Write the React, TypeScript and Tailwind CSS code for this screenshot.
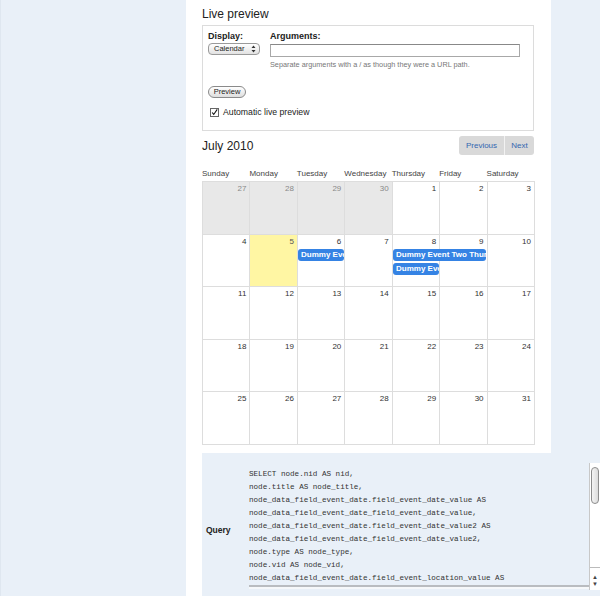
const weeks: { day: number; other?: boolean; today?: boolean }[][] = [
  [{ day: 27, other: true }, { day: 28, other: true }, { day: 29, other: true }, { day: 30, other: true }, { day: 1 }, { day: 2 }, { day: 3 }],
  [{ day: 4 }, { day: 5, today: true }, { day: 6 }, { day: 7 }, { day: 8 }, { day: 9 }, { day: 10 }],
  [11, 12, 13, 14, 15, 16, 17].map((d) => ({ day: d })),
  [18, 19, 20, 21, 22, 23, 24].map((d) => ({ day: d })),
  [25, 26, 27, 28, 29, 30, 31].map((d) => ({ day: d })),
];

const dayNames = ['Sunday', 'Monday', 'Tuesday', 'Wednesday', 'Thursday', 'Friday', 'Saturday'];

const sqlLines = [
  'SELECT node.nid AS nid,',
  'node.title AS node_title,',
  'node_data_field_event_date.field_event_date_value AS',
  'node_data_field_event_date_field_event_date_value,',
  'node_data_field_event_date.field_event_date_value2 AS',
  'node_data_field_event_date_field_event_date_value2,',
  'node.type AS node_type,',
  'node.vid AS node_vid,',
  'node_data_field_event_date.field_event_location_value AS',
];

// event chip on the week row
function EventChip({ label, className }: { label: string; className: string }): React.ReactElement {
  return (
    <div
      className={`absolute h-[12px] overflow-hidden whitespace-nowrap rounded-[3px] bg-[#3583e4] pl-[3px] text-[8px] font-bold leading-[12px] text-white ${className}`}
    >
      {label}
    </div>
  );
}

export default function App(): React.ReactElement {
  return (
    <div className="h-[596px] overflow-hidden border-l border-[#dfe7f0] bg-[#e9f0f8] font-['Liberation_Sans',Arial,sans-serif] text-[#222]">
      <div className="ml-[185px] h-[596px] w-[365px] bg-white pl-4 pr-[17px] pt-[5px]">
        <h2 className="text-[12px] leading-[18px] text-[#222]">Live preview</h2>

        {/* preview options */}
        <div className="mt-[2px] h-[106px] border border-[#dcdcdc] px-[5px] pt-[5px]">
          <div className="flex">
            <div className="w-[62px]">
              <div className="text-[9px] font-bold leading-[11px]">Display:</div>
              <div className="mt-[1px] flex h-[12px] w-[52px] items-center justify-between rounded-[4px] border border-[#9a9a9a] bg-gradient-to-b from-white to-[#e2e2e2] pl-[5px] pr-[3px] text-[7.5px] leading-none">
                <span>Calendar</span>
                <svg width="5" height="8" viewBox="0 0 5 8">
                  <path d="M2.5 0.5 L4.5 3 L0.5 3 Z M2.5 7.5 L4.5 5 L0.5 5 Z" fill="#333" />
                </svg>
              </div>
            </div>
            <div>
              <div className="text-[9px] font-bold leading-[11px]">Arguments:</div>
              <div className="mt-[2px] h-[13px] w-[250px] border border-[#a8a8a8] border-t-[#888] bg-white" />
              <div className="mt-[3px] text-[7.3px] leading-[9px] text-[#777]">
                Separate arguments with a / as though they were a URL path.
              </div>
            </div>
          </div>
          <div className="mt-[17px] flex h-[12px] w-[38px] items-center justify-center rounded-full border border-[#8a8a8a] bg-gradient-to-b from-white to-[#dedede] text-[7.5px] leading-none">
            Preview
          </div>
          <div className="mt-[9px] flex items-center pl-[2px]">
            <span className="flex h-[9px] w-[9px] items-center justify-center border border-[#666] bg-white">
              <svg width="9" height="9" viewBox="0 0 9 9">
                <path d="M1.5 4.5 L3.5 7 L8 0.5" fill="none" stroke="#111" strokeWidth="1.4" />
              </svg>
            </span>
            <span className="ml-[4px] text-[8.7px] leading-[10px]">Automatic live preview</span>
          </div>
        </div>

        {/* calendar header */}
        <div className="mt-[5px] flex h-[19px] items-center justify-between">
          <div className="text-[12px] leading-[14px]">July 2010</div>
          <div className="flex h-[19px] overflow-hidden rounded-[3px] bg-[#d9d9d9] text-[8px] leading-[19px] text-[#3466b0]">
            <span className="w-[45px] text-center">Previous</span>
            <span className="w-px bg-[#f2f2f2]" />
            <span className="w-[29px] text-center">Next</span>
          </div>
        </div>

        <div className="mt-[14px] grid w-[332px] grid-cols-7 text-[8px] leading-[10px] text-[#444]">
          {dayNames.map((n) => (
            <div key={n}>{n}</div>
          ))}
        </div>

        <div className="mt-[2px] w-[333px] border-l border-t border-[#dddddd]">
          {weeks.map((week, wi) => (
            <div key={wi} className="relative grid h-[52.6px] grid-cols-7">
              {week.map((c, ci) => (
                <div
                  key={ci}
                  className={`border-b border-r border-[#dddddd] pr-[3px] pt-[2px] text-right text-[8px] leading-[10px] ${
                    c.other ? 'bg-[#e8e8e8] text-[#888]' : c.today ? 'bg-[#fff6a3] text-[#555]' : 'bg-white text-[#333]'
                  }`}
                >
                  {c.day}
                </div>
              ))}
              {wi === 1 && (
                <>
                  <EventChip label="Dummy Event One" className="left-[95px] top-[14px] w-[46px]" />
                  <EventChip label="Dummy Event Two Thursday" className="left-[190px] top-[14px] w-[93px]" />
                  <EventChip label="Dummy Event Three" className="left-[190px] top-[28px] w-[46px]" />
                </>
              )}
            </div>
          ))}
        </div>

        {/* query */}
        <div className="mt-[8px] flex h-[150px] w-[398px] bg-[#e9f0f8]">
          <div className="flex w-[47px] items-center pl-[4px] pt-[4px] text-[8.5px] font-bold">Query</div>
          <div className="mt-[10px] flex h-[128px] w-[351px]">
            <div className="h-[124px] w-[340px] border-b-2 border-[#b9bcc0] pt-[5px] font-['Liberation_Mono','Courier_New',monospace] text-[7.6px] leading-[13px] text-[#333] shadow-[0_2px_0_#f6f8fa]">
              {sqlLines.map((l) => (
                <div key={l} className="whitespace-pre">
                  {l}
                </div>
              ))}
            </div>
            <div className="relative h-[127px] w-[11px] border-l border-[#c8c8c8] bg-white">
              <div className="absolute left-[1px] top-[4px] h-[37px] w-[8px] rounded-full border border-[#8c8c8c] bg-gradient-to-r from-[#f4f4f4] to-[#dcdcdc]" />
              <div className="absolute bottom-[22px] left-0 h-px w-[10px] bg-[#bbb]" />
              <div className="absolute bottom-[10px] left-[2px] text-[6px] leading-[6px] text-[#444]">▲</div>
              <div className="absolute bottom-[3px] left-[2px] text-[6px] leading-[6px] text-[#444]">▼</div>
            </div>
          </div>
        </div>
      </div>
    </div>
  );
}
